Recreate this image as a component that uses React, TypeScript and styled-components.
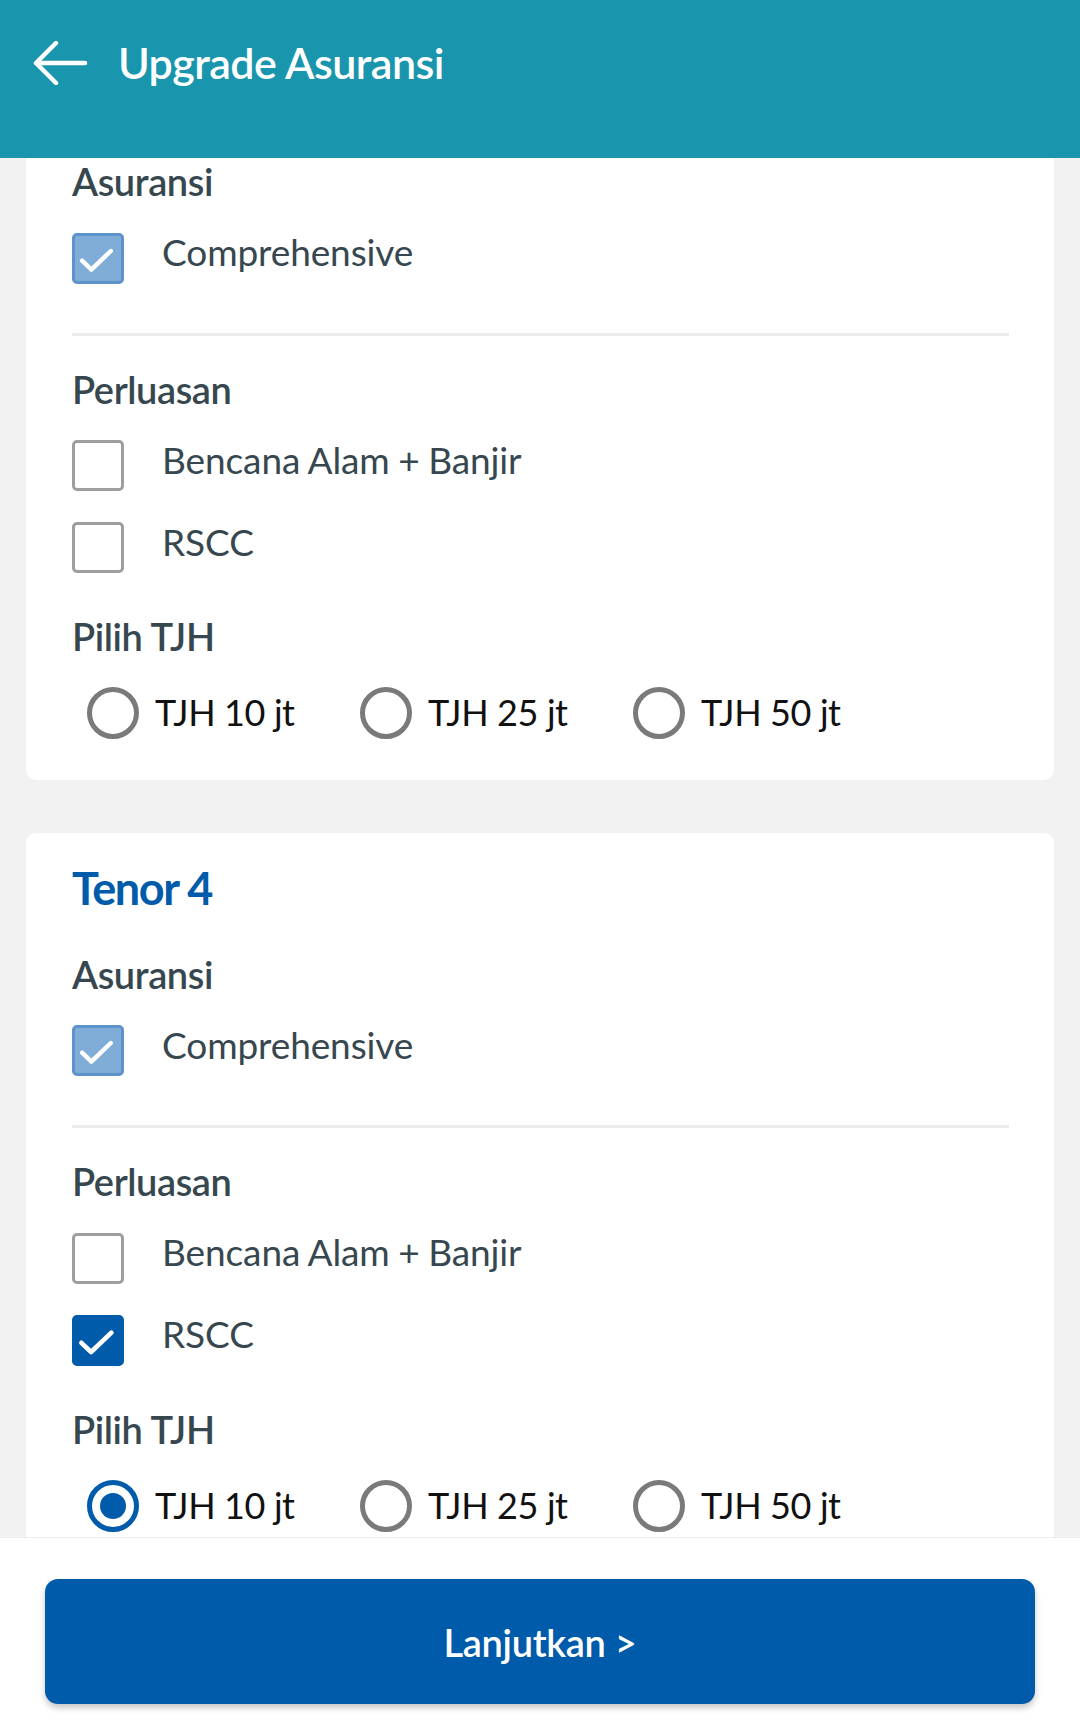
import React from "react";
import styled, { createGlobalStyle } from "styled-components";

const GlobalStyle = createGlobalStyle`
  html, body {
    margin: 0;
    padding: 0;
    background: #f2f2f3;
    font-family: Lato, "Open Sans", "Noto Sans", sans-serif;
    -webkit-font-smoothing: antialiased;
  }
  * { box-sizing: border-box; }
`;

const BLUE = "#005baa";
const SLATE = "#37474f";

const Screen = styled.div`
  position: relative;
  min-height: 100vh;
`;

const AppBar = styled.header`
  position: fixed;
  top: 0;
  left: 0;
  right: 0;
  z-index: 10;
  height: 158px;
  background: #1995ad;
  display: flex;
  align-items: center;
  padding: 0 0 32px 32px;
  gap: 30px;
`;

const BackButton = styled.button`
  border: none;
  background: transparent;
  padding: 0;
  width: 56px;
  height: 44px;
  display: flex;
  align-items: center;
  justify-content: center;
  cursor: pointer;
`;

const AppTitle = styled.h1`
  margin: 0;
  color: #ffffff;
  font-size: 43px;
  font-weight: 600;
  line-height: 1.2;
  letter-spacing: -0.55px;
`;

const CardList = styled.main`
  display: flex;
  flex-direction: column;
  gap: 53px;
  padding: 40px 26px 220px;
`;

const Card = styled.section`
  background: #ffffff;
  border-radius: 10px;
  padding: 27px 45px 41px 46px;
  display: flex;
  flex-direction: column;
`;

const TenorTitle = styled.h2`
  margin: 0;
  color: ${BLUE};
  font-size: 45px;
  font-weight: 700;
  line-height: 56px;
  letter-spacing: -1.4px;
`;

const SectionLabel = styled.h3<{ $top: number }>`
  margin: ${(p) => p.$top}px 0 0;
  color: ${SLATE};
  font-size: 38px;
  font-weight: 600;
  line-height: 1.2;
  letter-spacing: -0.4px;
`;

const OptionStack = styled.div<{ $top: number }>`
  margin-top: ${(p) => p.$top}px;
  display: flex;
  flex-direction: column;
  gap: 31px;
`;

const CheckRow = styled.label`
  display: flex;
  align-items: center;
  height: 51px;
  gap: 38px;
`;

type BoxState = "off" | "on" | "locked";

const Box = styled.span<{ $state: BoxState }>`
  flex: 0 0 52px;
  width: 52px;
  height: 51px;
  border-radius: 5px;
  display: flex;
  align-items: center;
  justify-content: center;
  background: ${(p) =>
    p.$state === "on" ? BLUE : p.$state === "locked" ? "#80add7" : "#ffffff"};
  border: ${(p) =>
    p.$state === "on"
      ? `2px solid ${BLUE}`
      : p.$state === "locked"
      ? "3px solid #5e92cb"
      : "3px solid #9e9e9e"};
`;

const CheckLabel = styled.span`
  color: ${SLATE};
  font-size: 37px;
  font-weight: 400;
  line-height: 1.2;
  letter-spacing: -0.1px;
  word-spacing: -0.8px;
  margin-bottom: 12px;
`;

const Divider = styled.hr`
  margin: 49px 0 0;
  border: none;
  height: 3px;
  background: #ececec;
`;

const RadioRow = styled.div<{ $top: number }>`
  margin-top: ${(p) => p.$top}px;
  display: flex;
  padding-left: 15px;
`;

const RadioItem = styled.label`
  flex: 0 0 273px;
  display: flex;
  align-items: center;
  gap: 16px;
  height: 52px;
`;

const RadioCircle = styled.span<{ $checked: boolean }>`
  flex: 0 0 52px;
  width: 52px;
  height: 52px;
  border-radius: 50%;
  border: 5px solid ${(p) => (p.$checked ? BLUE : "#7a7a7a")};
  display: flex;
  align-items: center;
  justify-content: center;
`;

const RadioDot = styled.span`
  width: 26px;
  height: 26px;
  border-radius: 50%;
  background: ${BLUE};
`;

const RadioLabel = styled.span`
  color: #111111;
  font-size: 36px;
  font-weight: 400;
  line-height: 1.2;
  letter-spacing: -0.4px;
`;

const BottomBar = styled.footer`
  position: fixed;
  left: 0;
  right: 0;
  bottom: 0;
  z-index: 10;
  height: 194px;
  background: #ffffff;
  border-top: 1px solid #eeeeee;
  padding: 41px 45px 27px;
`;

const PrimaryButton = styled.button`
  width: 100%;
  height: 125px;
  border: none;
  border-radius: 13px;
  background: ${BLUE};
  color: #ffffff;
  font-family: Lato, "Open Sans", sans-serif;
  font-size: 38px;
  font-weight: 600;
  letter-spacing: -0.3px;
  box-shadow: 0 4px 6px rgba(0, 0, 0, 0.22);
  cursor: pointer;
`;

const CheckMark = () => (
  <svg width="52" height="51" viewBox="0 0 52 51" fill="none">
    <polyline
      points="8,28 18.5,38 40.5,17"
      stroke="#ffffff"
      strokeWidth="5"
      strokeLinecap="round"
      strokeLinejoin="round"
    />
  </svg>
);

const ArrowBack = () => (
  <svg width="56" height="44" viewBox="0 0 56 44" fill="none">
    <path
      d="M53 22H4M24 2L4 22l20 20"
      stroke="#ffffff"
      strokeWidth="4.5"
      strokeLinecap="round"
      strokeLinejoin="round"
    />
  </svg>
);

type TenorData = {
  tenor: number;
  comprehensive: boolean;
  bencana: boolean;
  rscc: boolean;
  tjh: string | null;
};

const tenors: TenorData[] = [
  { tenor: 3, comprehensive: true, bencana: false, rscc: false, tjh: null },
  { tenor: 4, comprehensive: true, bencana: false, rscc: true, tjh: "10" },
];

const tjhOptions = ["10", "25", "50"];

const Check = ({ state, label }: { state: BoxState; label: string }) => (
  <CheckRow>
    <Box $state={state}>{state !== "off" && <CheckMark />}</Box>
    <CheckLabel>{label}</CheckLabel>
  </CheckRow>
);

const TenorCard = ({ data }: { data: TenorData }) => (
  <Card>
    <TenorTitle>Tenor {data.tenor}</TenorTitle>
    <SectionLabel $top={36}>Asuransi</SectionLabel>
    <OptionStack $top={28}>
      <Check state={data.comprehensive ? "locked" : "off"} label="Comprehensive" />
    </OptionStack>
    <Divider />
    <SectionLabel $top={31}>Perluasan</SectionLabel>
    <OptionStack $top={28}>
      <Check state={data.bencana ? "on" : "off"} label="Bencana Alam + Banjir" />
      <Check state={data.rscc ? "on" : "off"} label="RSCC" />
    </OptionStack>
    <SectionLabel $top={41}>Pilih TJH</SectionLabel>
    <RadioRow $top={27}>
      {tjhOptions.map((v) => (
        <RadioItem key={v}>
          <RadioCircle $checked={data.tjh === v}>
            {data.tjh === v && <RadioDot />}
          </RadioCircle>
          <RadioLabel>TJH {v} jt</RadioLabel>
        </RadioItem>
      ))}
    </RadioRow>
  </Card>
);

export default function App() {
  return (
    <Screen>
      <GlobalStyle />
      <AppBar>
        <BackButton aria-label="Kembali">
          <ArrowBack />
        </BackButton>
        <AppTitle>Upgrade Asuransi</AppTitle>
      </AppBar>
      <CardList>
        {tenors.map((t) => (
          <TenorCard key={t.tenor} data={t} />
        ))}
      </CardList>
      <BottomBar>
        <PrimaryButton>Lanjutkan &gt;</PrimaryButton>
      </BottomBar>
    </Screen>
  );
}
